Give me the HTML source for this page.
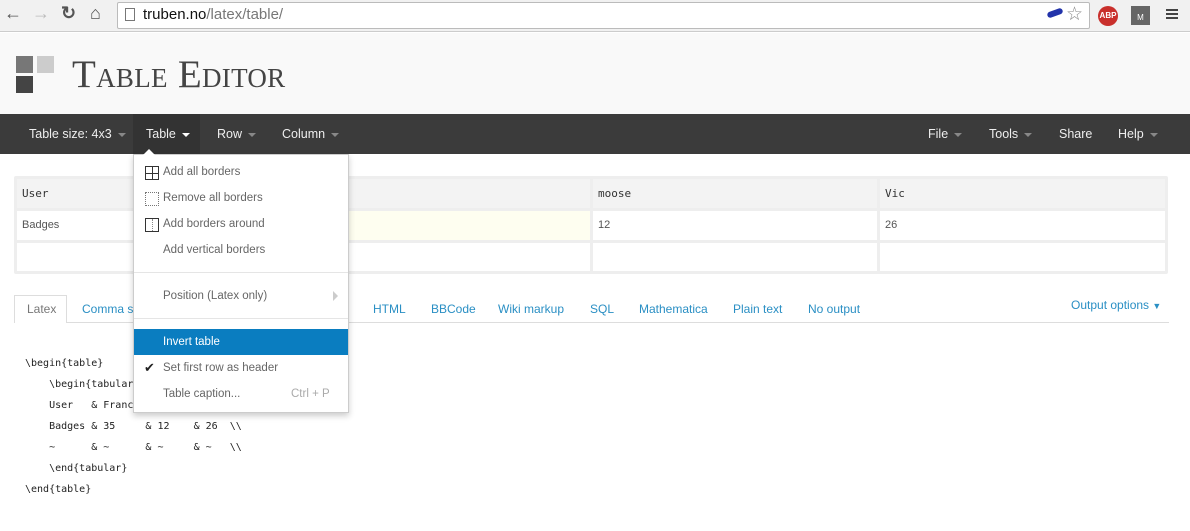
<!DOCTYPE html>
<html><head><style>
*{margin:0;padding:0;box-sizing:border-box}
body{width:1190px;height:531px;overflow:hidden;background:#fff;font-family:"Liberation Sans",sans-serif;position:relative}
.a{position:absolute}
.nav span{position:absolute;top:13px;color:#eee;font-size:12.5px}
.car{display:inline-block;width:0;height:0;border-left:4px solid transparent;border-right:4px solid transparent;border-top:4px solid #888;vertical-align:middle;margin-left:6px}
.cell{position:absolute;background:#fff;font-size:11px;color:#555;padding:0 5px;line-height:29px}
.h{background:#f3f3f3;font-family:"DejaVu Sans Mono",monospace;font-size:11px;color:#333}
.tab{position:absolute;top:302px;font-size:12px;color:#2a8fc4}
.mi{position:absolute;left:29px;font-size:11.5px;color:#666}
pre{position:absolute;left:25px;top:353px;font-family:"DejaVu Sans Mono",monospace;font-size:10px;line-height:21px;color:#222}
</style></head><body>
<div class="a" style="left:0;top:0;width:1190px;height:32px;background:#f1f1f1;border-bottom:1px solid #ccc"></div>
<div class="a" style="left:4px;top:3px;font-size:18px;color:#555;font-weight:bold">&#8592;</div>
<div class="a" style="left:32px;top:3px;font-size:18px;color:#bbb;font-weight:bold">&#8594;</div>
<div class="a" style="left:61px;top:3px;font-size:18px;color:#555;font-weight:bold">&#8635;</div>
<div class="a" style="left:90px;top:3px;font-size:18px;color:#555;font-weight:bold">&#8962;</div>
<div class="a" style="left:117px;top:2px;width:973px;height:27px;background:#fff;border:1px solid #bbb;border-radius:2px"></div>
<div class="a" style="left:125px;top:8px;width:10px;height:13px;border:1px solid #777"></div>
<div class="a" style="left:143px;top:6px;font-size:15px;color:#111">truben.no<span style="color:#777">/latex/table/</span></div>
<div class="a" style="left:1047px;top:10px;width:16px;height:6px;background:#2233aa;border-radius:3px;transform:rotate(-20deg)"></div>
<div class="a" style="left:1066px;top:3px;font-size:19px;color:#888">&#9734;</div>
<div class="a" style="left:1098px;top:6px;width:20px;height:20px;border-radius:50%;background:#c9302c;color:#fff;font-size:8px;font-weight:bold;line-height:20px;text-align:center">ABP</div>
<div class="a" style="left:1131px;top:6px;width:19px;height:19px;background:#666;color:#fff;font-size:8px;text-align:center;line-height:24px">M</div>
<div class="a" style="left:1166px;top:9px;width:12px;height:2px;background:#444;box-shadow:0 4px #444,0 8px #444"></div>
<div class="a" style="left:0;top:33px;width:1190px;height:81px;background:#f9f9f9"></div>
<div class="a" style="left:16px;top:56px;width:17px;height:17px;background:#777"></div>
<div class="a" style="left:37px;top:56px;width:17px;height:17px;background:#ccc"></div>
<div class="a" style="left:16px;top:76px;width:17px;height:17px;background:#444"></div>
<div class="a" style="left:72px;top:52px;font-family:'Liberation Serif',serif;font-size:39px;color:#444;font-variant:small-caps;letter-spacing:0.3px">Table Editor</div>
<div class="a nav" style="left:0;top:114px;width:1190px;height:40px;background:#3b3b3b">
<div class="a" style="left:133px;top:0;width:67px;height:40px;background:#333"></div>
<span style="left:29px">Table size: 4x3<i class="car"></i></span>
<span style="left:146px">Table<i class="car" style="border-top-color:#fff"></i></span>
<span style="left:217px">Row<i class="car"></i></span>
<span style="left:282px">Column<i class="car"></i></span>
<span style="left:928px">File<i class="car"></i></span>
<span style="left:989px">Tools<i class="car"></i></span>
<span style="left:1059px">Share</span>
<span style="left:1118px">Help<i class="car"></i></span>
</div>
<div class="a" style="left:14px;top:176px;width:1154px;height:98px;background:#eee;border-radius:2px"></div>
<div class="cell h" style="left:17px;top:179px;width:288px;height:29px">User</div>
<div class="cell h" style="left:308px;top:179px;width:282px;height:29px"></div>
<div class="cell h" style="left:593px;top:179px;width:284px;height:29px">moose</div>
<div class="cell h" style="left:880px;top:179px;width:285px;height:29px">Vic</div>
<div class="cell" style="left:17px;top:211px;width:288px;height:29px;line-height:28px">Badges</div>
<div class="cell" style="left:308px;top:211px;width:282px;height:29px;background:#fefef0"></div>
<div class="cell" style="left:593px;top:211px;width:284px;height:29px;line-height:28px">12</div>
<div class="cell" style="left:880px;top:211px;width:285px;height:29px;line-height:28px">26</div>
<div class="cell" style="left:17px;top:243px;width:288px;height:28px"></div>
<div class="cell" style="left:308px;top:243px;width:282px;height:28px"></div>
<div class="cell" style="left:593px;top:243px;width:284px;height:28px"></div>
<div class="cell" style="left:880px;top:243px;width:285px;height:28px"></div>
<div class="a" style="left:14px;top:322px;width:1155px;height:1px;background:#ddd"></div>
<div class="a" style="left:14px;top:295px;width:53px;height:28px;background:#fff;border:1px solid #ddd;border-bottom:none"></div>
<div class="tab" style="left:27px;color:#777">Latex</div>
<div class="tab" style="left:82px">Comma se</div>
<div class="tab" style="left:373px">HTML</div>
<div class="tab" style="left:431px">BBCode</div>
<div class="tab" style="left:498px">Wiki markup</div>
<div class="tab" style="left:590px">SQL</div>
<div class="tab" style="left:639px">Mathematica</div>
<div class="tab" style="left:733px">Plain text</div>
<div class="tab" style="left:808px">No output</div>
<div class="tab" style="left:1071px;top:298px">Output options <span style="font-size:9px">&#9660;</span></div>
<pre>\begin{table}
    \begin{tabular
    User   &amp; Franc
    Badges &amp; 35     &amp; 12    &amp; 26  \\
    ~      &amp; ~      &amp; ~     &amp; ~   \\
    \end{tabular}
\end{table}</pre>
<div class="a" style="left:133px;top:154px;width:216px;height:259px;background:#fff;border:1px solid #ccc;box-shadow:0 3px 6px rgba(0,0,0,.2)">
<div class="a" style="left:11px;top:11px;width:14px;height:14px;border:1px solid #333"><div class="a" style="left:6px;top:0;width:1px;height:12px;background:#333"></div><div class="a" style="left:0;top:6px;width:12px;height:1px;background:#333"></div></div>
<div class="mi" style="top:11px">Add all borders</div>
<div class="a" style="left:11px;top:37px;width:14px;height:14px;border:1px dotted #777"></div>
<div class="mi" style="top:37px">Remove all borders</div>
<div class="a" style="left:11px;top:63px;width:14px;height:14px;border:1px solid #333"><div class="a" style="left:6px;top:0;width:1px;height:12px;border-left:1px dotted #888"></div></div>
<div class="mi" style="top:63px">Add borders around</div>
<div class="mi" style="top:89px">Add vertical borders</div>
<div class="a" style="left:0;top:117px;width:214px;height:1px;background:#e5e5e5"></div>
<div class="mi" style="top:135px">Position (Latex only)</div>
<div class="a" style="left:199px;top:136px;border-top:5px solid transparent;border-bottom:5px solid transparent;border-left:5px solid #ccc"></div>
<div class="a" style="left:0;top:163px;width:214px;height:1px;background:#e5e5e5"></div>
<div class="a" style="left:0;top:174px;width:214px;height:26px;background:#0a7dc0"></div>
<div class="mi" style="top:181px;color:#fff">Invert table</div>
<div class="a" style="left:10px;top:205px;font-size:13px;color:#222">&#10004;</div>
<div class="mi" style="top:207px">Set first row as header</div>
<div class="mi" style="top:233px">Table caption...</div>
<div class="mi" style="top:233px;left:157px;color:#aaa">Ctrl + P</div>
</div>
<div class="a" style="left:143px;top:149px;border-left:6px solid transparent;border-right:6px solid transparent;border-bottom:6px solid #fff"></div>
</body></html>
